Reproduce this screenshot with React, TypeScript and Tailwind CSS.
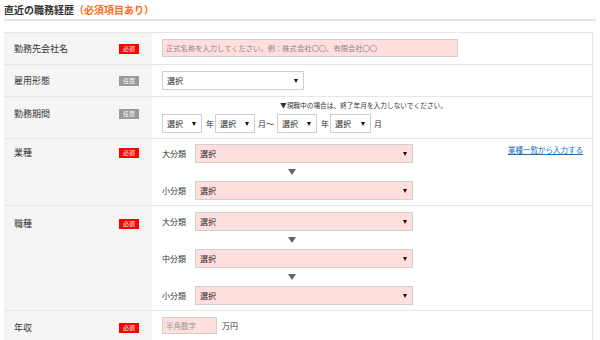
import React from 'react';

const FONT = { fontFamily: '"Noto Sans CJK JP", "Noto Sans", sans-serif' };

type Badge = 'req' | 'opt';

const Tag = ({ type }: { type: Badge }) => (
    <span
        className={`w-[20px] h-[10px] flex items-center justify-center text-[6px] leading-none text-white ${type === 'req' ? 'bg-[#ff0000]' : 'bg-[#9a9a9a]'}`}
    >
        {type === 'req' ? '必須' : '任意'}
    </span>
);

const Caret = () => (
    <span className="w-0 h-0 border-l-[2.5px] border-r-[2.5px] border-t-[4px] border-l-transparent border-r-transparent border-t-[#111]" />
);

const Select = ({ w, pink, h = 'h-[19px]' }: { w: string; pink?: boolean; h?: string }) => (
    <div
        className={`${w} ${h} flex items-center justify-between pl-[4px] pr-[5px] border border-[#cfcfcf] ${pink ? 'bg-[#ffdede]' : 'bg-white'}`}
    >
        <span className="text-[8px] text-[#222]">選択</span>
        <Caret />
    </div>
);

const DownArrow = () => (
    <div className="flex pl-[126px] h-[18px] items-center">
        <span className="w-0 h-0 border-l-[4px] border-r-[4px] border-t-[6px] border-l-transparent border-r-transparent border-t-[#666]" />
    </div>
);

const Row = ({
    label,
    tag,
    rowH,
    labelTop,
    children
}: {
    label: string;
    tag: Badge;
    rowH: string;
    labelTop: string;
    children: React.ReactNode;
}) => (
    <div className={`flex ${rowH} border-b border-[#e6e6e6]`}>
        <div className={`w-[148px] shrink-0 bg-[#f5f5f5] flex items-start justify-between pl-[10px] pr-[13px] ${labelTop}`}>
            <span className="text-[9px] leading-[12px] text-[#333]">{label}</span>
            <span className="mt-[1px]"><Tag type={tag} /></span>
        </div>
        <div className="flex-1 pl-[10px] relative">{children}</div>
    </div>
);

const Classified = ({ label, children }: { label: string; children?: React.ReactNode }) => (
    <div className="flex items-center">
        <span className="w-[33px] text-[8px] text-[#333]">{label}</span>
        {children}
    </div>
);

export default function App() {
    return (
        <div className="w-[600px] h-[340px] overflow-hidden bg-white text-[#333]" style={FONT}>
            {/* Title */}
            <div className="px-[4px] pt-[2px]">
                <h2 className="text-[10px] font-bold leading-[15px] pb-[2px] border-b-2 border-[#e3e3e3]">
                    直近の職務経歴<span className="text-[#ff6a1a]">（必須項目あり）</span>
                </h2>
            </div>

            {/* Form table */}
            <div className="mt-[11px] ml-[4px] w-[589px] border-t border-r border-[#e6e6e6]">
                <Row label="勤務先会社名" tag="req" rowH="h-[32px]" labelTop="pt-[10px]">
                    <div className="pt-[6px]">
                        <div className="w-[296px] h-[18px] bg-[#ffdede] border border-[#cfcfcf] flex items-center pl-[3px] text-[7.3px] text-[#888]">
                            正式名称を入力してください。例：株式会社〇〇、有限会社〇〇
                        </div>
                    </div>
                </Row>

                <Row label="雇用形態" tag="opt" rowH="h-[32px]" labelTop="pt-[10px]">
                    <div className="pt-[6px]">
                        <Select w="w-[142px]" h="h-[19px]" />
                    </div>
                </Row>

                <Row label="勤務期間" tag="opt" rowH="h-[42px]" labelTop="pt-[11px]">
                    <div className="pt-[4px] pl-[118px] text-[6.7px] leading-[9px] text-[#333]">
                        ▼現職中の場合は、終了年月を入力しないでください。
                    </div>
                    <div className="flex items-center mt-[4px] text-[8px]">
                        <Select w="w-[40px]" h="h-[19px]" />
                        <span className="ml-[4px] mr-[1px]">年</span>
                        <Select w="w-[40px]" h="h-[19px]" />
                        <span className="ml-[3px] mr-[3px]">月～</span>
                        <Select w="w-[40px]" h="h-[19px]" />
                        <span className="ml-[4px] mr-[1px]">年</span>
                        <Select w="w-[41px]" h="h-[19px]" />
                        <span className="ml-[3px]">月</span>
                    </div>
                </Row>

                <Row label="業種" tag="req" rowH="h-[67px]" labelTop="pt-[8px]">
                    <div className="pt-[5px]">
                        <Classified label="大分類">
                            <Select w="w-[218px]" pink />
                        </Classified>
                        <DownArrow />
                        <Classified label="小分類">
                            <Select w="w-[218px]" pink />
                        </Classified>
                    </div>
                    <a className="absolute right-[9px] top-[5px] text-[7.5px] text-[#1a6fb5] underline">
                        業種一覧から入力する
                    </a>
                </Row>

                <Row label="職種" tag="req" rowH="h-[105px]" labelTop="pt-[12px]">
                    <div className="pt-[6px]">
                        <Classified label="大分類">
                            <Select w="w-[218px]" pink />
                        </Classified>
                        <DownArrow />
                        <Classified label="中分類">
                            <Select w="w-[218px]" pink />
                        </Classified>
                        <DownArrow />
                        <Classified label="小分類">
                            <Select w="w-[218px]" pink />
                        </Classified>
                    </div>
                </Row>

                <Row label="年収" tag="req" rowH="h-[40px]" labelTop="pt-[11px]">
                    <div className="flex items-center pt-[6px]">
                        <div className="w-[55px] h-[17px] bg-[#ffdede] border border-[#cfcfcf] flex items-center pl-[3px] text-[7.5px] text-[#999]">
                            半角数字
                        </div>
                        <span className="ml-[5px] text-[8px]">万円</span>
                    </div>
                </Row>
            </div>
        </div>
    );
}
